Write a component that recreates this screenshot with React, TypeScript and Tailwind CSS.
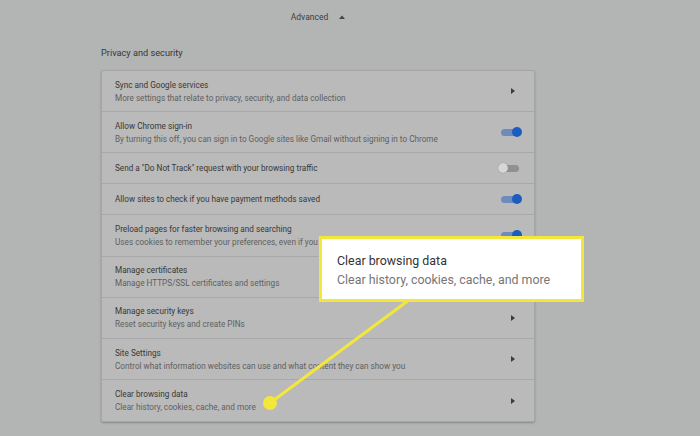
import React from 'react';

type Trailing = 'arrow' | 'on' | 'off';

interface Row {
  title: string;
  sub?: string;
  trailing: Trailing;
}

const rows: Row[] = [
  { title: 'Sync and Google services', sub: 'More settings that relate to privacy, security, and data collection', trailing: 'arrow' },
  { title: 'Allow Chrome sign-in', sub: 'By turning this off, you can sign in to Google sites like Gmail without signing in to Chrome', trailing: 'on' },
  { title: 'Send a "Do Not Track" request with your browsing traffic', trailing: 'off' },
  { title: 'Allow sites to check if you have payment methods saved', trailing: 'on' },
  { title: 'Preload pages for faster browsing and searching', sub: 'Uses cookies to remember your preferences, even if you don\u2019t visit those pages', trailing: 'on' },
  { title: 'Manage certificates', sub: 'Manage HTTPS/SSL certificates and settings', trailing: 'arrow' },
  { title: 'Manage security keys', sub: 'Reset security keys and create PINs', trailing: 'arrow' },
  { title: 'Site Settings', sub: 'Control what information websites can use and what content they can show you', trailing: 'arrow' },
  { title: 'Clear browsing data', sub: 'Clear history, cookies, cache, and more', trailing: 'arrow' },
];

const Toggle = ({ on }: { on: boolean }) => (
  <div className="relative w-[24px] h-[11px] flex items-center">
    <div className={`absolute left-[3px] right-[3px] h-[7px] rounded-full ${on ? 'bg-[#6d8bbd]' : 'bg-[#8f9090]'}`} />
    <div
      className={`absolute w-[10px] h-[10px] rounded-full ${on ? 'right-0 bg-[#1c5cc0]' : 'left-0 bg-[#d6d6d6] shadow-[0_0_1px_rgba(0,0,0,0.4)]'}`}
    />
  </div>
);

const Arrow = () => (
  <div className="w-[24px] flex justify-center pl-[5px]">
    <svg width="4" height="6" viewBox="0 0 4 6">
      <path d="M0 0 L4 3 L0 6 Z" fill="#3b3b3b" />
    </svg>
  </div>
);

const SettingRow = ({ row, last }: { row: Row; last: boolean }) => (
  <div
    className={`flex items-center justify-between pl-[13px] pr-[12px] ${row.sub ? 'h-[41.2px]' : 'h-[31px]'} ${last ? '' : 'border-b border-[#a9a9a9]'}`}
  >
    <div className="flex flex-col gap-[3px] leading-[10px]">
      <span className="text-[8.2px] text-[#383838]">{row.title}</span>
      {row.sub && <span className="text-[8.2px] text-[#5f5f5f]">{row.sub}</span>}
    </div>
    {row.trailing === 'arrow' ? <Arrow /> : <Toggle on={row.trailing === 'on'} />}
  </div>
);

export default function App() {
  return (
    <div
      className="relative w-[700px] h-[436px] overflow-hidden bg-[#b3b5b5]"
      style={{ fontFamily: 'Roboto, "Noto Sans", sans-serif' }}
    >
      <div className="ml-[101px] w-[434px]">
        <div className="h-[33px] flex items-center justify-center gap-[11px] pt-[1px]">
          <span className="text-[8.5px] text-[#3d3d3d]">Advanced</span>
          <svg width="6" height="4" viewBox="0 0 6 4">
            <path d="M0 4 L3 0.5 L6 4 Z" fill="#444" />
          </svg>
        </div>
        <div className="h-[37px] flex items-center text-[9.2px] text-[#353535] pt-[2px]">Privacy and security</div>
        <div className="bg-[#bababa] border border-[#a6a6a6] rounded-[2px] shadow-[0_1px_2px_rgba(0,0,0,0.25)]">
          {rows.map((row, i) => (
            <SettingRow key={row.title} row={row} last={i === rows.length - 1} />
          ))}
        </div>
      </div>

      {/* callout pointer */}
      <svg className="absolute inset-0" width="700" height="436" viewBox="0 0 700 436">
        <line x1="270" y1="403" x2="409" y2="300" stroke="#f3e73c" strokeWidth="3" />
        <circle cx="270" cy="403" r="7" fill="#f3e73c" />
      </svg>

      {/* callout box */}
      <div className="absolute left-[319px] top-[236px] w-[265px] h-[66px] bg-white border-[3px] border-[#f3e73c] flex flex-col justify-center pl-[15px] pt-[3px] gap-[3px]">
        <span className="text-[12.4px] leading-[16px] text-[#333]">Clear browsing data</span>
        <span className="text-[12.4px] leading-[16px] text-[#767676]">Clear history, cookies, cache, and more</span>
      </div>
    </div>
  );
}
